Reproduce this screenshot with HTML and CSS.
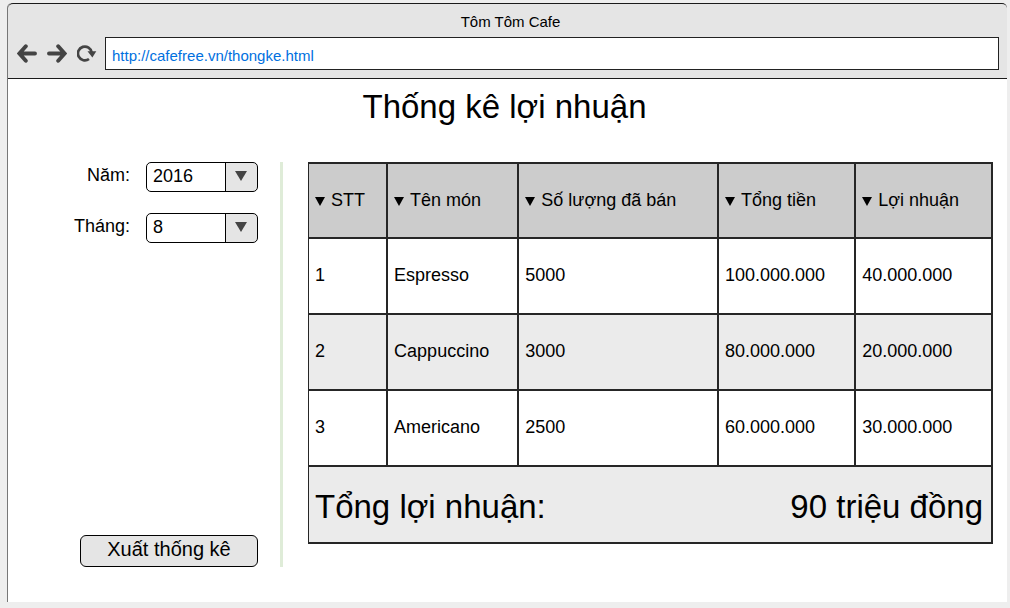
FILE: index.html
```html
<!DOCTYPE html>
<html lang="vi">
<head>
<meta charset="utf-8">
<meta name="viewport" content="width=device-width, initial-scale=1">
<title>Tôm Tôm Cafe</title>
<link rel="stylesheet" href="styles.css">
</head>
<body>
<div class="browser">
  <header class="toolbar">
    <div class="window-title">Tôm Tôm Cafe</div>
    <div class="nav">
      <div class="nav-buttons">
        <button class="nav-button" type="button" aria-label="Back">
          <svg viewBox="0 0 20 20" width="20" height="20"><path d="M18 9.500H3M8.800 2.200L2.400 9.500l6.400 7.300" fill="none" stroke="#444" stroke-width="3.900" stroke-linecap="round" stroke-linejoin="miter"/></svg>
        </button>
        <button class="nav-button" type="button" aria-label="Forward">
          <svg viewBox="0 0 20 20" width="20" height="20"><path d="M2 9.500H17M11.200 2.200L17.600 9.500l-6.400 7.300" fill="none" stroke="#444" stroke-width="3.900" stroke-linecap="round" stroke-linejoin="miter"/></svg>
        </button>
        <button class="nav-button" type="button" aria-label="Reload">
          <svg viewBox="0 0 20 20" width="20" height="20"><path d="M12 15A6.900 6.900 0 1 1 14.700 8.500" fill="none" stroke="#444" stroke-width="2.700"/><path d="M10.500 7.200H19.300L15.400 13.500Z" fill="#444"/></svg>
        </button>
      </div>
      <input class="address" type="text" aria-label="Address" value="http://cafefree.vn/thongke.html">
    </div>
  </header>
  <main class="page">
    <h1 class="page-title">Thống kê lợi nhuận</h1>
    <div class="content">
      <form class="sidebar">
        <div class="filters">
          <label class="filter-label" for="year">Năm:</label>
          <div class="select-box"><select class="select" id="year"><option>2016</option></select><svg class="select-arrow" viewBox="0 0 12 10" width="12" height="10"><path d="M0 0H12L6 10Z" fill="#444"/></svg></div>
          <label class="filter-label" for="month">Tháng:</label>
          <div class="select-box"><select class="select" id="month"><option>8</option></select><svg class="select-arrow" viewBox="0 0 12 10" width="12" height="10"><path d="M0 0H12L6 10Z" fill="#444"/></svg></div>
        </div>
        <button class="export" type="button">Xuất thống kê</button>
      </form>
      <div class="report">
        <table class="table">
          <colgroup><col class="col-index"><col class="col-name"><col class="col-quantity"><col class="col-total"><col class="col-profit"></colgroup>
          <thead>
            <tr>
              <th scope="col"><span class="sort"></span>STT</th>
              <th scope="col"><span class="sort"></span>Tên món</th>
              <th scope="col"><span class="sort"></span>Số lượng đã bán</th>
              <th scope="col"><span class="sort"></span>Tổng tiền</th>
              <th scope="col"><span class="sort"></span>Lợi nhuận</th>
            </tr>
          </thead>
          <tbody>
            <tr><td>1</td><td>Espresso</td><td>5000</td><td>100.000.000</td><td>40.000.000</td></tr>
            <tr><td>2</td><td>Cappuccino</td><td>3000</td><td>80.000.000</td><td>20.000.000</td></tr>
            <tr><td>3</td><td>Americano</td><td>2500</td><td>60.000.000</td><td>30.000.000</td></tr>
          </tbody>
          <tfoot>
            <tr><td class="sum-label" colspan="3">Tổng lợi nhuận:</td><td class="sum-value" colspan="2">90 triệu đồng</td></tr>
          </tfoot>
        </table>
      </div>
    </div>
  </main>
</div>
</body>
</html>
```
FILE: styles.css
```css
* {
  box-sizing: border-box;
}

body {
  margin: 0;
  padding: 3px 3px 6px 7px;
  min-height: 100vh;
  display: flex;
  background: #eee;
  color: #000;
  font: 18px/24px "Liberation Sans", Arial, sans-serif;
}

button,
input,
select {
  font: inherit;
  color: inherit;
}

.browser {
  flex: 1;
  display: flex;
  flex-direction: column;
  border-left: 1px solid #777;
  border-radius: 5px 5px 0 0;
  background: #fff;
}

.toolbar {
  padding: 6px 8px 8px 9px;
  border-top: 1px solid #1a1a1a;
  border-bottom: 1px solid #1a1a1a;
  border-radius: 5px 5px 0 0;
  background: #e5e5e5;
}

.window-title {
  margin-bottom: 3px;
  padding-left: 5px;
  font-size: 15px;
  text-align: center;
}

.nav {
  display: flex;
  align-items: center;
  gap: 8px;
}

.nav-buttons {
  display: flex;
  gap: 10px;
}

.nav-button {
  display: flex;
  padding: 0;
  border: 0;
  background: none;
}

.address {
  flex: 1;
  min-width: 0;
  height: 33px;
  padding: 3px 6px 0;
  border: 1px solid #222;
  border-radius: 0;
  background: #fff;
  color: #0070e0;
  font-size: 15px;
}

.page {
  flex: 1;
  padding: 7px 14px 34px 68px;
}

.page-title {
  margin: 0 0 34px;
  padding-right: 60px;
  font-size: 33px;
  line-height: 42px;
  font-weight: normal;
  text-align: center;
}

.content {
  display: flex;
}

.sidebar {
  flex: none;
  width: 207px;
  padding-right: 22px;
  border-right: 3px solid #dfecd8;
  display: flex;
  flex-direction: column;
  justify-content: space-between;
}

.filters {
  display: grid;
  grid-template-columns: 54px 112px;
  justify-content: end;
  gap: 21px 16px;
}

.filter-label {
  padding-top: 1px;
  display: flex;
  justify-content: flex-end;
}

.select-box {
  position: relative;
}

.select {
  display: block;
  width: 100%;
  height: 30px;
  padding: 0 38px 3px 6px;
  border: 1px solid #000;
  border-radius: 5px;
  appearance: none;
  background: linear-gradient(to right, #000 1px, #e5e5e5 1px) right / 32px 100% no-repeat #fff;
}

.select-arrow {
  position: absolute;
  right: 11px;
  top: 9px;
  pointer-events: none;
}

.export {
  align-self: flex-end;
  width: 178px;
  height: 32px;
  padding: 0 0 4px;
  border: 1px solid #000;
  border-radius: 6px;
  background: #e5e5e5;
  font-size: 20px;
}

.report {
  flex: 1;
  padding: 0 0 23px 25px;
}

.table {
  width: 100%;
  table-layout: fixed;
  border-collapse: collapse;
  background: #fff;
}

.col-index {
  width: 11.5%;
}

.col-name {
  width: 19.2%;
}

.col-quantity {
  width: 29.2%;
}

.col-total {
  width: 20.1%;
}

.col-profit {
  width: 20%;
}

.table th,
.table td {
  height: 76px;
  padding: 0 6px 2px;
  border: 2px solid #262626;
  font-weight: normal;
  text-align: left;
}

.table th {
  height: 75px;
  background: #ccc;
}

.table th:first-child,
.table td:first-child {
  border-left-width: 1px;
}

.table tbody tr:nth-child(even),
.table tfoot {
  background: #ebebeb;
}

.sort {
  display: inline-block;
  margin-right: 6px;
  border: solid transparent;
  border-width: 9px 5px 0;
  border-top-color: #000;
}

.table .sum-label,
.table .sum-value {
  height: 77px;
  padding-top: 4px;
  padding-bottom: 0;
  font-size: 33px;
  line-height: 42px;
}

.table .sum-label {
  border-right: 0;
}

.table .sum-value {
  border-left: 0;
  padding-right: 8px;
  text-align: right;
}
```
